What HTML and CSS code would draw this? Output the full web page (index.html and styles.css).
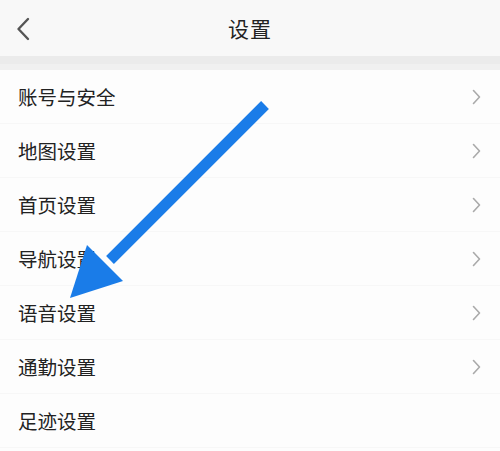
FILE: index.html
```html
<!DOCTYPE html>
<html lang="zh">
<head>
<meta charset="utf-8">
<link rel="stylesheet" href="styles.css">
</head>
<body>
<div class="page">
  <header class="topbar">
    <svg class="back" width="14" height="24" viewBox="0 0 14 24"><path d="M12 2 L2.5 12 L12 22" fill="none" stroke="#555" stroke-width="2.4" stroke-linecap="round" stroke-linejoin="round"/></svg>
    <h1 class="title">设置</h1>
  </header>
  <div class="band"></div>
  <ul class="list">
    <li class="row"><span class="label">账号与安全</span><svg class="chev" width="9" height="16" viewBox="0 0 9 16"><path d="M1.5 1.5 L7.5 8 L1.5 14.5" fill="none" stroke="#aaa" stroke-width="1.6" stroke-linecap="round" stroke-linejoin="round"/></svg></li>
    <li class="row"><span class="label">地图设置</span><svg class="chev" width="9" height="16" viewBox="0 0 9 16"><path d="M1.5 1.5 L7.5 8 L1.5 14.5" fill="none" stroke="#aaa" stroke-width="1.6" stroke-linecap="round" stroke-linejoin="round"/></svg></li>
    <li class="row"><span class="label">首页设置</span><svg class="chev" width="9" height="16" viewBox="0 0 9 16"><path d="M1.5 1.5 L7.5 8 L1.5 14.5" fill="none" stroke="#aaa" stroke-width="1.6" stroke-linecap="round" stroke-linejoin="round"/></svg></li>
    <li class="row"><span class="label">导航设置</span><svg class="chev" width="9" height="16" viewBox="0 0 9 16"><path d="M1.5 1.5 L7.5 8 L1.5 14.5" fill="none" stroke="#aaa" stroke-width="1.6" stroke-linecap="round" stroke-linejoin="round"/></svg></li>
    <li class="row"><span class="label">语音设置</span><svg class="chev" width="9" height="16" viewBox="0 0 9 16"><path d="M1.5 1.5 L7.5 8 L1.5 14.5" fill="none" stroke="#aaa" stroke-width="1.6" stroke-linecap="round" stroke-linejoin="round"/></svg></li>
    <li class="row"><span class="label">通勤设置</span><svg class="chev" width="9" height="16" viewBox="0 0 9 16"><path d="M1.5 1.5 L7.5 8 L1.5 14.5" fill="none" stroke="#aaa" stroke-width="1.6" stroke-linecap="round" stroke-linejoin="round"/></svg></li>
    <li class="row"><span class="label">足迹设置</span></li>
  </ul>
  <svg class="arrow" width="500" height="451" viewBox="0 0 500 451">
    <line x1="265" y1="105" x2="110" y2="260" stroke="#1a7ce8" stroke-width="11" stroke-linecap="butt"/>
    <polygon points="87,245 123,281 70,298" fill="#1a7ce8"/>
  </svg>
</div>
</body>
</html>
```
FILE: styles.css
```css
* { box-sizing: border-box; }
html, body { margin: 0; padding: 0; }
body {
  width: 500px;
  height: 451px;
  overflow: hidden;
  background: #fdfdfd;
  font-family: "Noto Sans CJK SC", "Noto Sans", sans-serif;
  color: #222;
}
.page { position: relative; width: 500px; height: 451px; }
.topbar {
  height: 56px;
  background: #f8f8f8;
  display: flex;
  align-items: center;
  justify-content: center;
  position: relative;
}
.back { position: absolute; left: 16px; top: 17px; }
.title {
  margin: 0;
  font-size: 21px;
  font-weight: 400;
  color: #222;
  letter-spacing: 1px;
  line-height: 1;
}
.band {
  height: 14px;
  background: linear-gradient(#ebebeb 0, #ebebeb 8px, #f0f0f0 8px, #f0f0f0 14px);
}
.list { list-style: none; margin: 0; padding: 0; background: #fdfdfd; }
.row {
  height: 54px;
  display: flex;
  align-items: center;
  justify-content: space-between;
  padding: 0 18px 0 18px;
  border-bottom: 1px solid #f7f7f7;
}
.label { font-size: 19.5px; line-height: 1; color: #222; }
.chev { margin-right: 1px; }
.arrow { position: absolute; left: 0; top: 0; pointer-events: none; }
```
